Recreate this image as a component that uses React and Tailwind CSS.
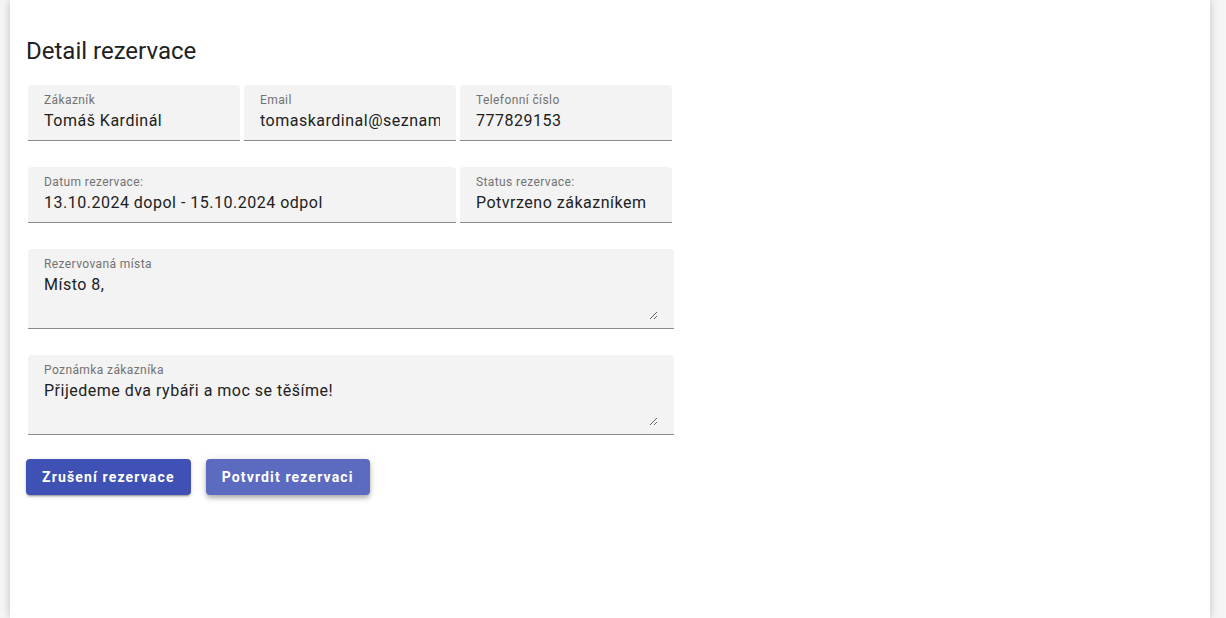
import { useState } from "react";

function Field({ label, value, className = "" }) {
    return (
        <div className={"bg-[#f3f3f3] rounded-t border-b border-[#8c8c8c] px-4 pt-[7px] pb-2 " + className}>
            <label className="block text-xs leading-[17px] tracking-[0.4px] text-[#727272]">{label}</label>
            <input
                readOnly
                value={value}
                className="block w-full h-[23px] bg-transparent outline-none text-base text-[#212121] tracking-[0.5px]"
            />
        </div>
    );
}

function AreaField({ label, value }) {
    const [text, setText] = useState(value);
    return (
        <div className="bg-[#f3f3f3] rounded-t border-b border-[#8c8c8c] px-4 pt-[7px] pb-2 w-[646px]">
            <label className="block text-xs leading-[17px] tracking-[0.4px] text-[#727272]">{label}</label>
            <textarea
                value={text}
                onChange={(e) => setText(e.target.value)}
                className="block w-full h-[47px] bg-transparent outline-none resize-y text-base leading-[23px] text-[#212121] tracking-[0.5px]"
            />
        </div>
    );
}

export default function App() {
    return (
        <div className="min-h-screen bg-[#f5f5f5] px-[10px] font-['Roboto',sans-serif]">
            <div className="w-[1200px] h-[618px] bg-white shadow-[0_0_8px_rgba(0,0,0,0.22)] px-4 pt-[35px]">
                <h1 className="text-2xl leading-8 text-[#212121]">Detail rezervace</h1>

                <div className="ml-[2px] mt-[18px] flex flex-col gap-[26px]">
                    <div className="flex gap-1">
                        <Field label="Zákazník" value="Tomáš Kardinál" className="w-[212px]" />
                        <Field label="Email" value="tomaskardinal@seznam.cz" className="w-[212px]" />
                        <Field label="Telefonní číslo" value="777829153" className="w-[212px]" />
                    </div>
                    <div className="flex gap-1">
                        <Field label="Datum rezervace:" value="13.10.2024 dopol - 15.10.2024 odpol" className="w-[428px]" />
                        <Field label="Status rezervace:" value="Potvrzeno zákazníkem" className="w-[212px]" />
                    </div>
                    <AreaField label="Rezervovaná místa" value="Místo 8," />
                    <AreaField label="Poznámka zákazníka" value="Přijedeme dva rybáři a moc se těšíme!" />
                </div>

                <div className="mt-6 flex gap-[15px]">
                    <button className="h-9 px-4 rounded bg-[#3f51b5] text-white text-sm font-bold tracking-[1.15px] shadow-[0_3px_1px_-2px_rgba(0,0,0,0.2),0_2px_2px_0_rgba(0,0,0,0.14),0_1px_5px_0_rgba(0,0,0,0.12)]">
                        Zrušení rezervace
                    </button>
                    <button className="h-9 px-4 rounded bg-[#5c6bc0] text-white text-sm font-bold tracking-[1.15px] shadow-[0_2px_4px_-1px_rgba(0,0,0,0.2),0_4px_5px_0_rgba(0,0,0,0.14),0_1px_10px_0_rgba(0,0,0,0.12)]">
                        Potvrdit rezervaci
                    </button>
                </div>
            </div>
        </div>
    );
}
